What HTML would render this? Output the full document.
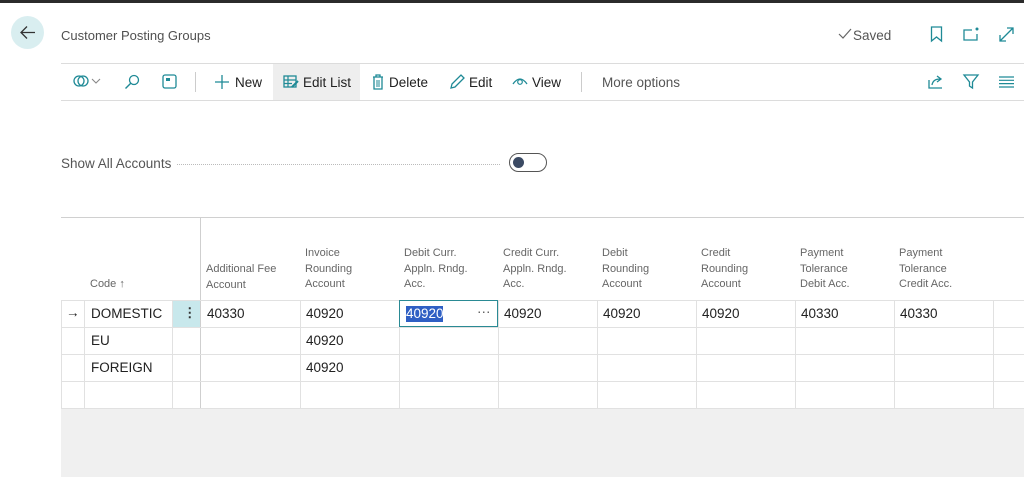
<!DOCTYPE html>
<html><head><meta charset="utf-8"><style>
*{margin:0;padding:0;box-sizing:border-box}
body{width:1024px;height:477px;background:#fff;font-family:"Liberation Sans",sans-serif;color:#333;position:relative;overflow:hidden}
.a{position:absolute}
.t{font-size:13.5px;color:#212121;white-space:nowrap}
.h{font-size:11px;color:#666;line-height:15.5px}
.vl{position:absolute;width:1px;background:#e1e1e1}
.hl{position:absolute;height:1px;background:#e1e1e1}
svg{position:absolute;overflow:visible}
</style></head><body>
<div class="a" style="left:0;top:0;width:1024px;height:3px;background:#2b2b2b"></div>
<div class="a" style="left:11px;top:16px;width:33px;height:33px;border-radius:50%;background:#d9eef0"></div>
<svg style="left:19px;top:24px" width="18" height="18"><path d="M16 8.5H2M8 2.5L2 8.5L8 14.5" stroke="#333" stroke-width="1.3" fill="none"/></svg>
<div class="a t" style="left:61px;top:28px;font-size:13px;color:#505050">Customer Posting Groups</div>
<svg style="left:838px;top:28px" width="14" height="12"><path d="M1 6L5 10L13 1" stroke="#666" stroke-width="1.2" fill="none"/></svg>
<div class="a t" style="left:853px;top:28px;color:#555">Saved</div>
<svg style="left:930px;top:26px" width="14" height="17"><path d="M1.5 1H11.5V15L6.5 11L1.5 15Z" stroke="#1f8a96" stroke-width="1.3" fill="none"/></svg>
<svg style="left:963px;top:27px" width="17" height="15"><path d="M9 3H1V13H14V7" stroke="#1f8a96" stroke-width="1.3" fill="none"/><circle cx="14" cy="2" r="1.5" fill="#1f8a96"/></svg>
<svg style="left:998px;top:26px" width="17" height="17"><path d="M2 15L15 2M9 2H15V8M2 9V15H8" stroke="#1f8a96" stroke-width="1.3" fill="none"/></svg>
<div class="hl" style="left:61px;top:63px;width:963px;background:#dcdcdc"></div>
<div class="hl" style="left:61px;top:100px;width:963px;background:#dcdcdc"></div>
<div class="a" style="left:273px;top:64px;width:87px;height:36px;background:#eeeeee"></div>
<svg style="left:73px;top:74px" width="30" height="16"><circle cx="6" cy="7" r="5" stroke="#1f8a96" stroke-width="1.3" fill="none"/><circle cx="10" cy="7" r="5" stroke="#1f8a96" stroke-width="1.3" fill="none"/><path d="M19 5L23 9L27 5" stroke="#888" stroke-width="1.1" fill="none"/></svg>
<svg style="left:124px;top:74px" width="16" height="16"><circle cx="10" cy="6" r="4.5" stroke="#1f8a96" stroke-width="1.3" fill="none"/><path d="M7 9L1.5 14.5" stroke="#1f8a96" stroke-width="1.4"/></svg>
<svg style="left:162px;top:74px" width="16" height="16"><rect x="1" y="1" width="13" height="13" rx="2" stroke="#1f8a96" stroke-width="1.3" fill="none"/><rect x="4" y="4" width="4" height="3" fill="#1f8a96"/></svg>
<div class="vl" style="left:195px;top:72px;height:20px;background:#ccc"></div>
<svg style="left:214px;top:74px" width="16" height="16"><path d="M8 1V15M1 8H15" stroke="#1f8a96" stroke-width="1.3"/></svg>
<div class="a t" style="left:235px;top:75px">New</div>
<svg style="left:283px;top:75px" width="16" height="14"><rect x="1" y="1" width="12" height="11" stroke="#1f8a96" stroke-width="1.3" fill="none"/><path d="M1 5H13M1 8.5H9M5 1V12" stroke="#1f8a96" stroke-width="1.2"/><path d="M9 12L15 6" stroke="#1f8a96" stroke-width="2"/></svg>
<div class="a t" style="left:303px;top:75px">Edit List</div>
<svg style="left:372px;top:74px" width="12" height="16"><path d="M1 3H11M4 3V1H8V3M2 3V15H10V3" stroke="#1f8a96" stroke-width="1.3" fill="none"/><path d="M5 6V13M7 6V13" stroke="#1f8a96" stroke-width="1"/></svg>
<div class="a t" style="left:389px;top:75px">Delete</div>
<svg style="left:449px;top:74px" width="16" height="16"><path d="M2 14L3 10L12 1L15 4L6 13Z" stroke="#1f8a96" stroke-width="1.3" fill="none"/></svg>
<div class="a t" style="left:469px;top:75px">Edit</div>
<svg style="left:512px;top:76px" width="16" height="10"><path d="M1 8Q8 -2 15 8" stroke="#1f8a96" stroke-width="1.3" fill="none"/><circle cx="8" cy="6" r="2.3" stroke="#1f8a96" stroke-width="1.2" fill="none"/></svg>
<div class="a t" style="left:532px;top:75px">View</div>
<div class="vl" style="left:581px;top:72px;height:20px;background:#ccc"></div>
<div class="a t" style="left:602px;top:75px;color:#555">More options</div>
<svg style="left:928px;top:74px" width="16" height="16"><path d="M1 6V14H14" stroke="#1f8a96" stroke-width="1.3" fill="none"/><path d="M4 11Q5 5 12 5M9 2L13 5L9 8" stroke="#1f8a96" stroke-width="1.3" fill="none"/></svg>
<svg style="left:963px;top:74px" width="16" height="16"><path d="M1 1H15L9.5 8V14L6.5 12V8Z" stroke="#1f8a96" stroke-width="1.3" fill="none"/></svg>
<svg style="left:999px;top:76px" width="15" height="12"><path d="M0 1H15M0 4.3H15M0 7.6H15M0 11H15" stroke="#1f8a96" stroke-width="1.2"/></svg>
<div class="a t" style="left:61px;top:156px;color:#555">Show All Accounts</div>
<div class="a" style="left:177px;top:164px;width:323px;border-top:1px dotted #bbb"></div>
<div class="a" style="left:509px;top:153px;width:38px;height:19px;border:1.3px solid #555;border-radius:10px"></div>
<div class="a" style="left:513px;top:157px;width:11px;height:11px;border-radius:50%;background:#3b4a63"></div>
<div class="hl" style="left:61px;top:217px;width:963px;background:#d0d0d0"></div>
<div class="a" style="left:61px;top:408px;width:963px;height:69px;background:#f0f0f0"></div>
<div class="vl" style="left:200px;top:218px;height:190px;background:#cfcfcf"></div>
<div class="vl" style="left:61px;top:300px;height:108px"></div>
<div class="vl" style="left:84px;top:300px;height:108px"></div>
<div class="vl" style="left:172px;top:300px;height:108px"></div>
<div class="vl" style="left:300px;top:300px;height:108px"></div>
<div class="vl" style="left:399px;top:300px;height:108px"></div>
<div class="vl" style="left:498px;top:300px;height:108px"></div>
<div class="vl" style="left:597px;top:300px;height:108px"></div>
<div class="vl" style="left:696px;top:300px;height:108px"></div>
<div class="vl" style="left:795px;top:300px;height:108px"></div>
<div class="vl" style="left:894px;top:300px;height:108px"></div>
<div class="vl" style="left:993px;top:300px;height:108px"></div>
<div class="hl" style="left:61px;top:300px;width:963px"></div>
<div class="hl" style="left:61px;top:327px;width:963px"></div>
<div class="hl" style="left:61px;top:354px;width:963px"></div>
<div class="hl" style="left:61px;top:381px;width:963px"></div>
<div class="hl" style="left:61px;top:408px;width:963px"></div>
<div class="a h" style="left:90px;top:277px">Code ↑</div>
<div class="a h" style="left:206px;top:262px">Additional Fee<br>Account</div>
<div class="a h" style="left:305px;top:246px">Invoice<br>Rounding<br>Account</div>
<div class="a h" style="left:404px;top:246px">Debit Curr.<br>Appln. Rndg.<br>Acc.</div>
<div class="a h" style="left:503px;top:246px">Credit Curr.<br>Appln. Rndg.<br>Acc.</div>
<div class="a h" style="left:602px;top:246px">Debit<br>Rounding<br>Account</div>
<div class="a h" style="left:701px;top:246px">Credit<br>Rounding<br>Account</div>
<div class="a h" style="left:800px;top:246px">Payment<br>Tolerance<br>Debit Acc.</div>
<div class="a h" style="left:899px;top:246px">Payment<br>Tolerance<br>Credit Acc.</div>
<div class="a t" style="left:66px;top:305px">→</div>
<div class="a" style="left:173px;top:301px;width:27px;height:26px;background:#c8e8ec"></div>
<div class="a t" style="left:183px;top:305px;font-weight:bold;color:#333">⋮</div>
<div class="a" style="left:399px;top:300px;width:99px;height:27px;border:1px solid #2a8a94"></div>
<div class="a" style="left:406px;top:306px;width:37px;height:16px;background:#2f5fc4"></div>
<div class="a t" style="left:406px;top:306px;color:#fff">40920</div>
<div class="a t" style="left:477px;top:304px;color:#555">···</div>
<div class="a t" style="left:91px;top:306px">DOMESTIC</div>
<div class="a t" style="left:207px;top:306px">40330</div>
<div class="a t" style="left:306px;top:306px">40920</div>
<div class="a t" style="left:504px;top:306px">40920</div>
<div class="a t" style="left:603px;top:306px">40920</div>
<div class="a t" style="left:702px;top:306px">40920</div>
<div class="a t" style="left:801px;top:306px">40330</div>
<div class="a t" style="left:900px;top:306px">40330</div>
<div class="a t" style="left:91px;top:333px">EU</div>
<div class="a t" style="left:306px;top:333px">40920</div>
<div class="a t" style="left:91px;top:360px">FOREIGN</div>
<div class="a t" style="left:306px;top:360px">40920</div>
</body></html>
